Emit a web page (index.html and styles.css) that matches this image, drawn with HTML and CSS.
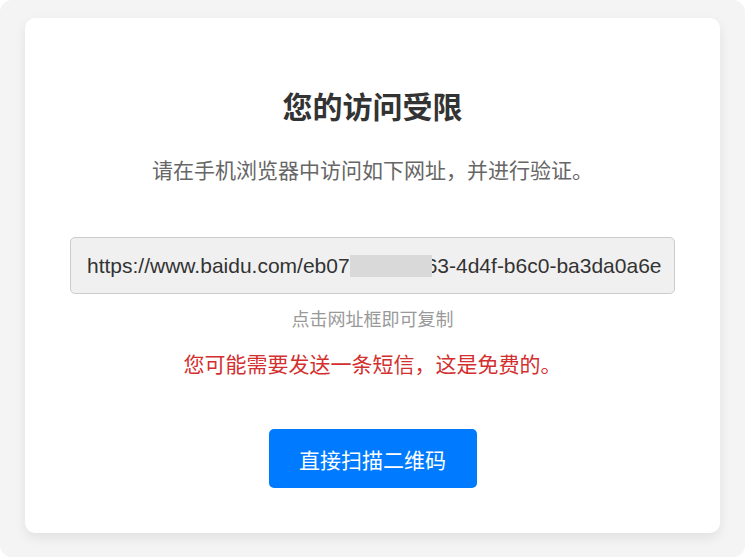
FILE: index.html
```html
<!DOCTYPE html>
<html lang="zh-CN">
<head>
    <meta charset="UTF-8">
    <meta name="viewport" content="width=device-width, initial-scale=1.0">
    <title>访问受限</title>
    <link rel="stylesheet" href="styles.css">
</head>
<body>

    <!-- 访问受限卡片 -->
    <div class="card">
        <h1 class="title">您的访问受限</h1>
        <p class="subtitle">请在手机浏览器中访问如下网址，并进行验证。</p>

        <div class="url-box" title="点击复制">
            <span class="url-text">https://www.baidu.com/eb07<span class="masked"></span>63-4d4f-b6c0-ba3da0a6e1f2</span>
        </div>
        <p class="hint">点击网址框即可复制</p>

        <p class="warning">您可能需要发送一条短信，这是免费的。</p>

        <button class="scan-btn">直接扫描二维码</button>
    </div>

</body>
</html>
```

FILE: styles.css
```css
html {
    background-color: #fff;
}
body {
    margin: 0;
    height: 557px;
    box-sizing: border-box;
    padding: 18px 25px 24px 25px;
    background-color: #f4f4f4;
    border-radius: 12px;
    font-family: "Liberation Sans", "Noto Sans CJK SC", sans-serif;
}
.card {
    background-color: white;
    border-radius: 10px;
    box-shadow: 0 5px 12px rgba(0, 0, 0, 0.08);
    height: 515px;
    box-sizing: border-box;
    padding: 72px 45px 0 45px;
    display: flex;
    flex-direction: column;
    align-items: center;
}
.title {
    margin: 0;
    font-size: 30px;
    line-height: 36px;
    font-weight: bold;
    color: #333;
}
.subtitle {
    margin: 30px 0 0 0;
    font-size: 21px;
    line-height: 30px;
    color: #666;
}
.url-box {
    margin-top: 51px;
    width: 100%;
    height: 57px;
    box-sizing: border-box;
    background-color: #f0f0f0;
    border: 1px solid #ccc;
    border-radius: 5px;
    padding: 0 12px 0 16px;
    display: flex;
    align-items: center;
    overflow: hidden;
    cursor: pointer;
}
.url-text {
    font-family: "Liberation Sans", Arial, sans-serif;
    font-size: 21px;
    line-height: 28px;
    color: #333;
    white-space: nowrap;
    overflow: hidden;
}
.masked {
    display: inline-block;
    width: 82px;
    height: 22px;
    margin-right: -6px;
    vertical-align: -4px;
    background-color: #d9d9d9;
    position: relative;
}
.hint {
    margin: 14px 0 0 0;
    font-size: 18px;
    line-height: 24px;
    color: #999;
}
.warning {
    margin: 18px 0 0 0;
    font-size: 21px;
    line-height: 30px;
    color: #d32f2f;
}
.scan-btn {
    margin-top: 49px;
    width: 208px;
    height: 59px;
    background-color: #007bff;
    color: white;
    border: none;
    border-radius: 5px;
    font-family: "Noto Sans CJK SC", sans-serif;
    font-size: 21px;
    cursor: pointer;
}
.scan-btn:hover {
    background-color: #0069d9;
}
```
